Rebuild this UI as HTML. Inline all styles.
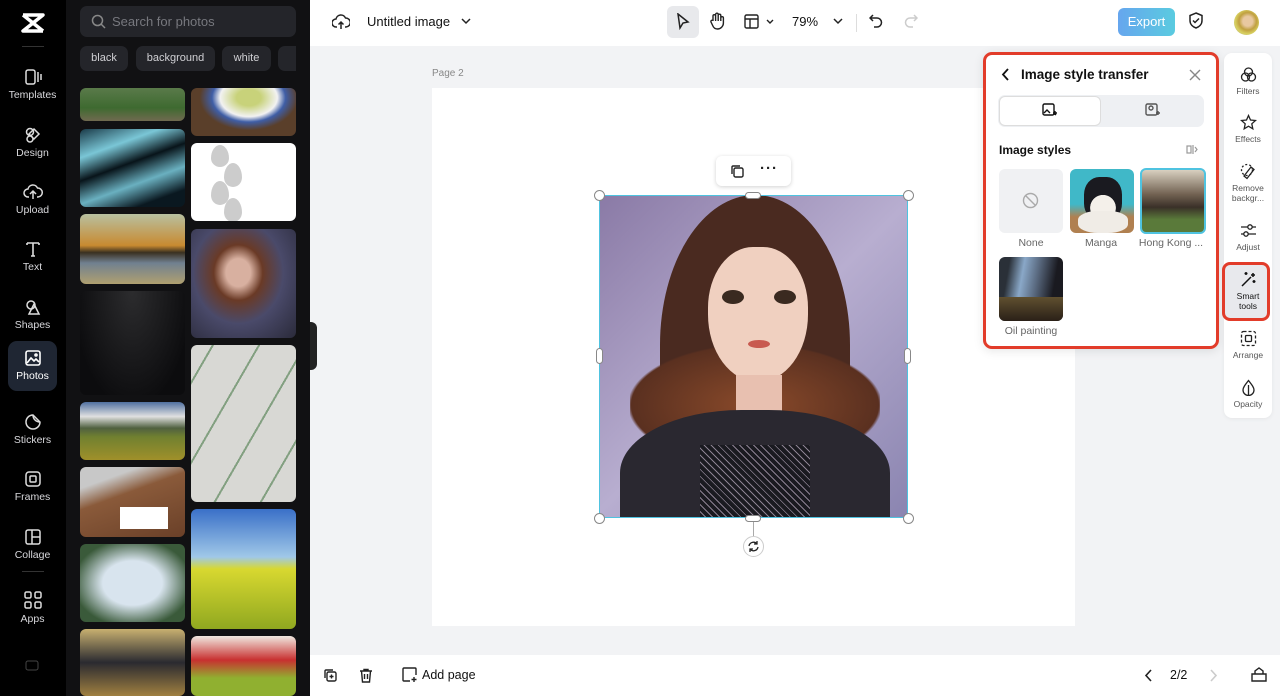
<!DOCTYPE html>
<html><head><meta charset="utf-8"><style>
*{box-sizing:border-box;margin:0;padding:0}
body{width:1280px;height:696px;overflow:hidden;font-family:"Liberation Sans",sans-serif;background:#f2f3f5;position:relative}
.abs{position:absolute}
.rail{left:0;top:0;width:66px;height:696px;background:#000}
.ri{position:absolute;left:8px;width:49px;height:52px;color:#d8d8dc;font-size:10.5px;text-align:center}
.ri svg{display:block;margin:4px auto 3px}
.panel{left:66px;top:0;width:244px;height:696px;background:#111113}
.ph{position:absolute;border-radius:6px}
.chip{position:absolute;top:46px;height:25px;background:#24252a;border-radius:7px;color:#d0d0d4;font-size:11px;line-height:25px;text-align:center}
.top{left:310px;top:0;width:970px;height:46px;background:#fff}
.bot{left:310px;top:655px;width:970px;height:41px;background:#fff}
.rp{position:absolute;left:1224px;width:48px;text-align:center;font-size:8.5px;color:#555;line-height:10px}
.rp svg{display:block;margin:0 auto 3px}
.sty{position:absolute;width:64px;height:64px;border-radius:6px}
.lbl{position:absolute;font-size:10.5px;color:#666;text-align:center;width:70px}
</style></head><body>
<div class="abs rail"></div>
<svg class="abs" style="left:20px;top:13px" width="26" height="20" viewBox="0 0 26 20"><path d="M3 2h20L3 18h20M3 2l20 16" stroke="#fff" stroke-width="3.5" fill="none" stroke-linejoin="round"/></svg>
<div class="abs" style="left:22px;top:46px;width:22px;height:1px;background:#333"></div>
<div class="ri" style="top:64px"><svg width="18" height="18" viewBox="0 0 18 18" fill="none" stroke="#ddd" stroke-width="1.5"><rect x="2" y="2" width="9" height="14" rx="2"/><path d="M14 4v10M17 6v6"/></svg>Templates</div>
<div class="ri" style="top:122px"><svg width="18" height="18" viewBox="0 0 18 18" fill="none" stroke="#ddd" stroke-width="1.5"><circle cx="6" cy="6" r="3.5"/><path d="M10 3l5 5-5 5-5-5z"/><circle cx="6" cy="13" r="3"/></svg>Design</div>
<div class="ri" style="top:179px"><svg width="20" height="18" viewBox="0 0 20 18" fill="none" stroke="#ddd" stroke-width="1.5"><path d="M6 14H5a4 4 0 010-8 5 5 0 019.5-1A4 4 0 0115 14h-1M10 16V9M7 11l3-3 3 3"/></svg>Upload</div>
<div class="ri" style="top:236px"><svg width="18" height="18" viewBox="0 0 18 18" fill="none" stroke="#ddd" stroke-width="1.6"><path d="M3 3h12M9 3v13M3 3v2M15 3v2M7 16h4"/></svg>Text</div>
<div class="ri" style="top:294px"><svg width="18" height="18" viewBox="0 0 18 18" fill="none" stroke="#ddd" stroke-width="1.5"><circle cx="7" cy="7" r="4"/><path d="M10 6l5 10H5z"/></svg>Shapes</div>
<div class="ri" style="top:341px;background:#1f2633;border-radius:9px;height:50px;color:#fff"><svg width="18" height="18" viewBox="0 0 18 18" fill="none" stroke="#fff" stroke-width="1.6" style="margin-top:8px"><rect x="2" y="2" width="14" height="14" rx="2"/><path d="M3 14l4-5 3 3 2-2 3 3"/><circle cx="12" cy="6" r="1"/></svg>Photos</div>
<div class="ri" style="top:409px"><svg width="18" height="18" viewBox="0 0 18 18" fill="none" stroke="#ddd" stroke-width="1.5"><path d="M16 9A7 7 0 119 2l7 7z M16 9c-4 0-7-3-7-7"/></svg>Stickers</div>
<div class="ri" style="top:466px"><svg width="18" height="18" viewBox="0 0 18 18" fill="none" stroke="#ddd" stroke-width="1.5"><rect x="2" y="2" width="14" height="14" rx="3"/><rect x="6" y="6" width="6" height="6" rx="1"/></svg>Frames</div>
<div class="ri" style="top:524px"><svg width="18" height="18" viewBox="0 0 18 18" fill="none" stroke="#ddd" stroke-width="1.5"><rect x="2" y="2" width="14" height="14" rx="2"/><path d="M8 2v14M8 9h8"/></svg>Collage</div>
<div class="abs" style="left:22px;top:571px;width:22px;height:1px;background:#333"></div>
<div class="ri" style="top:586px"><svg width="20" height="20" viewBox="0 0 20 20" fill="none" stroke="#ddd" stroke-width="1.5"><rect x="2" y="2" width="6" height="6" rx="1.5"/><rect x="12" y="2" width="6" height="6" rx="1.5"/><rect x="2" y="12" width="6" height="6" rx="1.5"/><rect x="12" y="12" width="6" height="6" rx="1.5"/></svg>Apps</div>
<svg class="abs" style="left:25px;top:660px" width="14" height="12"><rect x="1" y="1" width="12" height="9" rx="2" fill="none" stroke="#444"/></svg>

<div class="abs panel"></div>
<div class="abs" style="left:80px;top:6px;width:216px;height:31px;background:#24252a;border-radius:7px"></div>
<svg class="abs" style="left:91px;top:14px" width="15" height="15" fill="none" stroke="#888" stroke-width="1.5"><circle cx="6.5" cy="6.5" r="5"/><path d="M10 10l4 4"/></svg>
<div class="abs" style="left:112px;top:14px;font-size:13px;color:#77787e">Search for photos</div>
<div class="chip" style="left:80px;width:48px">black</div>
<div class="chip" style="left:136px;width:79px">background</div>
<div class="chip" style="left:222px;width:49px">white</div>
<div class="chip" style="left:278px;width:18px;border-radius:7px 0 0 7px"></div>
<div class="ph" style="left:80px;top:88px;width:105px;height:33px;background:linear-gradient(#5a7a4a,#3e6a30 60%,#706a50)"></div>
<div class="ph" style="left:191px;top:88px;width:105px;height:48px;background:radial-gradient(ellipse at 55% 20%,#c8d27a 15%,#f2f2f2 35%,#3f5ea6 45%,#5a3f2a 60%)"></div>
<div class="ph" style="left:80px;top:129px;width:105px;height:78px;background:linear-gradient(160deg,#1a3a48,#7ac6d6 25%,#08141a 45%,#6ab0c0 65%,#0a1820 85%)"></div>
<div class="ph" style="left:191px;top:143px;width:105px;height:78px;background:#fff;overflow:hidden">
<div style="position:absolute;left:20px;top:2px;width:18px;height:22px;background:#ccc;border-radius:50% 50% 50% 50%/60% 60% 40% 40%"></div>
<div style="position:absolute;left:33px;top:20px;width:18px;height:24px;background:#ccc;border-radius:50% 50% 50% 50%/60% 60% 40% 40%"></div>
<div style="position:absolute;left:20px;top:38px;width:18px;height:24px;background:#ccc;border-radius:50% 50% 50% 50%/60% 60% 40% 40%"></div>
<div style="position:absolute;left:33px;top:55px;width:18px;height:24px;background:#ccc;border-radius:50% 50% 50% 50%/60% 60% 40% 40%"></div>
</div>
<div class="ph" style="left:80px;top:214px;width:105px;height:70px;background:linear-gradient(#b8c0a0,#c88a30 45%,#3a3020 55%,#708090 70%,#b0a070)"></div>
<div class="ph" style="left:191px;top:229px;width:105px;height:109px;background:radial-gradient(ellipse at 45% 40%,#d8b0a0 15%,#6a3a26 30%,#4a4a6a 55%,#2a2a3a)"></div>
<div class="ph" style="left:80px;top:291px;width:105px;height:104px;background:radial-gradient(ellipse at 50% 0,#2c2c2e,#0c0c0e 80%)"></div>
<div class="ph" style="left:191px;top:345px;width:105px;height:157px;background:#d8d8d4"><div style="position:absolute;inset:0;background:repeating-linear-gradient(120deg,transparent 0 18px,#4a7a4a 18px 20px,transparent 20px 40px);opacity:.6;border-radius:6px"></div></div>
<div class="ph" style="left:80px;top:402px;width:105px;height:58px;background:linear-gradient(#5070a0,#e0e0e0 25%,#506040 45%,#708030 60%,#a0902a)"></div>
<div class="ph" style="left:80px;top:467px;width:105px;height:70px;background:linear-gradient(160deg,#c8c8c8 20%,#8a5a3a 40%,#6a4028)"><div style="position:absolute;left:40px;top:40px;width:48px;height:22px;background:#fff"></div></div>
<div class="ph" style="left:191px;top:509px;width:105px;height:120px;background:linear-gradient(#3a70c8,#a0c8e8 40%,#d8d830 50%,#90a820)"></div>
<div class="ph" style="left:80px;top:544px;width:105px;height:78px;background:radial-gradient(#d8e4ee 40%,#3a5a3a 80%)"></div>
<div class="ph" style="left:80px;top:629px;width:105px;height:67px;background:linear-gradient(#c8b070,#2a2a30 50%,#a08040)"></div>
<div class="ph" style="left:191px;top:636px;width:105px;height:60px;background:linear-gradient(#f0e8e0,#c83030 40%,#90b030 70%)"></div>
<div class="abs" style="left:310px;top:322px;width:7px;height:48px;background:#222;border-radius:0 6px 6px 0"></div>

<div class="abs top"></div>
<svg class="abs" style="left:332px;top:13px" width="18" height="18" fill="none" stroke="#222" stroke-width="1.5"><path d="M5 14H4a4 4 0 010-8 5 5 0 019.5-1A4 4 0 0114 14h-1M9 16V9M6.5 11.5L9 9l2.5 2.5"/></svg>
<div class="abs" style="left:367px;top:14px;font-size:13px;color:#111">Untitled image</div>
<svg class="abs" style="left:461px;top:17px" width="10" height="8" fill="none" stroke="#222" stroke-width="1.5"><path d="M1 2l4 4 4-4"/></svg>
<div class="abs" style="left:667px;top:6px;width:32px;height:32px;background:#e8e9ec;border-radius:6px"></div>
<svg class="abs" style="left:676px;top:13px" width="14" height="17" fill="none" stroke="#222" stroke-width="1.5"><path d="M2 1l10 8-5 1-3 5z"/></svg>
<svg class="abs" style="left:709px;top:12px" width="16" height="18" fill="none" stroke="#222" stroke-width="1.4"><path d="M4 9V4a1.3 1.3 0 012.6 0v5V2.5a1.3 1.3 0 012.6 0V9V3.5a1.3 1.3 0 012.6 0V9 6a1.3 1.3 0 012.6 0v5a6 6 0 01-6 6 5 5 0 01-4.5-3L2 10a1.3 1.3 0 012-1.5z"/></svg>
<svg class="abs" style="left:744px;top:14px" width="30" height="15" fill="none" stroke="#222" stroke-width="1.4"><rect x="1" y="1" width="13" height="13" rx="1.5"/><path d="M1 5h13M6 5v9M23 6l3 3 3-3"/></svg>
<div class="abs" style="left:792px;top:14px;font-size:13px;color:#111">79%</div>
<svg class="abs" style="left:833px;top:17px" width="10" height="8" fill="none" stroke="#222" stroke-width="1.5"><path d="M1 2l4 4 4-4"/></svg>
<div class="abs" style="left:856px;top:14px;width:1px;height:18px;background:#ddd"></div>
<svg class="abs" style="left:869px;top:13px" width="14" height="16" fill="none" stroke="#222" stroke-width="1.5"><path d="M4 2L1 5l3 3M1 5h7a4.5 4.5 0 010 9H5"/></svg>
<svg class="abs" style="left:904px;top:13px" width="14" height="16" fill="none" stroke="#ccc" stroke-width="1.5"><path d="M10 2l3 3-3 3M13 5H6a4.5 4.5 0 000 9h3"/></svg>
<div class="abs" style="left:1118px;top:8px;width:57px;height:28px;border-radius:6px;background:linear-gradient(90deg,#66a6ee,#5acbe0);color:#fff;font-size:13px;text-align:center;line-height:28px">Export</div>
<svg class="abs" style="left:1188px;top:12px" width="16" height="18" fill="none" stroke="#222" stroke-width="1.5"><path d="M8 1l6 2.5v5c0 4-3 6.5-6 7.5-3-1-6-3.5-6-7.5v-5z M5 8.5l2 2 4-4"/></svg>
<div class="abs" style="left:1234px;top:10px;width:25px;height:25px;border-radius:50%;background:radial-gradient(circle at 55% 45%,#e8c8a0 25%,#c0a040 45%,#d8d060 65%,#aaa)"></div>

<div class="abs" style="left:432px;top:68px;font-size:10px;color:#888">Page 2</div>
<div class="abs" style="left:432px;top:88px;width:643px;height:538px;background:#fff"></div>
<div class="abs" style="left:600px;top:195px;width:308px;height:323px;overflow:hidden;background:linear-gradient(135deg,#8a7aa6,#b8aed0 50%,#8a84b0)">
<div style="position:absolute;left:60px;top:0;width:190px;height:300px;border-radius:50% 50% 40% 40%;background:#4a2a20"></div>
<div style="position:absolute;left:30px;top:150px;width:250px;height:120px;border-radius:40%;background:radial-gradient(#8a4a2a,#5a3020 70%,transparent 72%)"></div>
<div style="position:absolute;left:108px;top:52px;width:100px;height:135px;border-radius:45% 45% 50% 50%;background:#f0d0c0"></div>
<div style="position:absolute;left:122px;top:95px;width:22px;height:14px;border-radius:50%;background:#3a2a20"></div>
<div style="position:absolute;left:174px;top:95px;width:22px;height:14px;border-radius:50%;background:#3a2a20"></div>
<div style="position:absolute;left:148px;top:145px;width:22px;height:8px;border-radius:50%;background:#c85a50"></div>
<div style="position:absolute;left:136px;top:180px;width:46px;height:40px;background:#e8c0b0"></div>
<div style="position:absolute;left:20px;top:215px;width:270px;height:140px;border-radius:45% 45% 0 0;background:#2a2830"></div>
<div style="position:absolute;left:100px;top:250px;width:110px;height:73px;background:repeating-linear-gradient(45deg,#1a1a20 0 4px,#8a8090 4px 5px)"></div>
</div>
<div class="abs" style="left:599px;top:195px;width:309px;height:323px;border:1.5px solid #4fc3e0"></div>
<div class="abs" style="left:594px;top:190px;width:11px;height:11px;border-radius:50%;background:#fff;border:1px solid #888"></div>
<div class="abs" style="left:903px;top:190px;width:11px;height:11px;border-radius:50%;background:#fff;border:1px solid #888"></div>
<div class="abs" style="left:594px;top:513px;width:11px;height:11px;border-radius:50%;background:#fff;border:1px solid #888"></div>
<div class="abs" style="left:903px;top:513px;width:11px;height:11px;border-radius:50%;background:#fff;border:1px solid #888"></div>
<div class="abs" style="left:745px;top:192px;width:16px;height:7px;border-radius:4px;background:#fff;border:1px solid #888"></div>
<div class="abs" style="left:745px;top:515px;width:16px;height:7px;border-radius:4px;background:#fff;border:1px solid #888"></div>
<div class="abs" style="left:596px;top:348px;width:7px;height:16px;border-radius:4px;background:#fff;border:1px solid #888"></div>
<div class="abs" style="left:904px;top:348px;width:7px;height:16px;border-radius:4px;background:#fff;border:1px solid #888"></div>
<div class="abs" style="left:753px;top:522px;width:1px;height:14px;background:#aaa"></div>
<div class="abs" style="left:743px;top:536px;width:21px;height:21px;border-radius:50%;background:#fff;border:1px solid #ccc"></div>
<svg class="abs" style="left:747px;top:540px" width="13" height="13" fill="none" stroke="#222" stroke-width="1.3"><path d="M2 6a4.5 4.5 0 018-2M11 7a4.5 4.5 0 01-8 2M10 1v3H7M3 12V9h3"/></svg>
<div class="abs" style="left:716px;top:156px;width:75px;height:30px;background:#fff;border-radius:6px;box-shadow:0 1px 4px rgba(0,0,0,.18)"></div>
<svg class="abs" style="left:730px;top:164px" width="15" height="15" fill="none" stroke="#222" stroke-width="1.4"><rect x="4" y="4" width="9" height="9" rx="1.5"/><path d="M2 10V3a1 1 0 011-1h7"/></svg>
<div class="abs" style="left:760px;top:160px;font-size:15px;font-weight:bold;color:#222;letter-spacing:1px">···</div>

<div class="abs" style="left:983px;top:52px;width:236px;height:297px;background:#fff;border:3px solid #e23c2a;border-radius:9px;box-shadow:0 2px 10px rgba(0,0,0,.1)"></div>
<svg class="abs" style="left:1001px;top:68px" width="10" height="13" fill="none" stroke="#111" stroke-width="1.8"><path d="M7 1L2 6.5 7 12"/></svg>
<div class="abs" style="left:1021px;top:67px;font-size:13.5px;font-weight:bold;color:#111">Image style transfer</div>
<svg class="abs" style="left:1189px;top:69px" width="12" height="12" fill="none" stroke="#888" stroke-width="1.4"><path d="M1 1l10 10M11 1L1 11"/></svg>
<div class="abs" style="left:998px;top:95px;width:206px;height:32px;background:#eef0f3;border-radius:7px"></div>
<div class="abs" style="left:999px;top:96px;width:102px;height:30px;background:#fff;border:1px solid #ddd;border-radius:6px"></div>
<svg class="abs" style="left:1042px;top:103px" width="16" height="15" fill="none" stroke="#111" stroke-width="1.4"><rect x="1" y="1" width="11" height="11" rx="1.5"/><path d="M2 10l3-3 3 3M12 10l2 2M13 8v4M11 10h4"/></svg>
<svg class="abs" style="left:1145px;top:103px" width="16" height="15" fill="none" stroke="#555" stroke-width="1.4"><rect x="1" y="1" width="11" height="11" rx="1.5"/><circle cx="6" cy="5" r="2"/><path d="M13 8v4M11 10h4"/></svg>
<div class="abs" style="left:999px;top:143px;font-size:12px;font-weight:bold;color:#111">Image styles</div>
<svg class="abs" style="left:1186px;top:144px" width="12" height="11" fill="none" stroke="#999" stroke-width="1.2"><rect x="1" y="2" width="4" height="7"/><path d="M7 1v9M9 3l2 2.5L9 8"/></svg>
<div class="sty" style="left:999px;top:169px;background:#f0f1f3"></div>
<svg class="abs" style="left:1022px;top:192px" width="17" height="17" fill="none" stroke="#aaa" stroke-width="1.4"><circle cx="8.5" cy="8.5" r="7"/><path d="M3.5 3.5l10 10"/></svg>
<div class="sty" style="left:1070px;top:169px;background:linear-gradient(#40b8c8 55%,#b08050 75%);overflow:hidden"><div style="position:absolute;left:14px;top:8px;width:38px;height:44px;border-radius:40%;background:radial-gradient(circle at 50% 70%,#f4f0ea 35%,#1a1a20 36%)"></div><div style="position:absolute;left:8px;top:42px;width:50px;height:22px;border-radius:40%;background:#f0ece6"></div></div>
<div class="sty" style="left:1140px;top:168px;width:66px;height:66px;border:2px solid #4fc3e0;background:linear-gradient(#d8d0c0,#706050 40%,#3a3028 60%,#5a7a3a 80%)"></div>
<div class="lbl" style="left:996px;top:237px">None</div>
<div class="lbl" style="left:1066px;top:237px">Manga</div>
<div class="lbl" style="left:1136px;top:237px">Hong Kong ...</div>
<div class="sty" style="left:999px;top:257px;background:linear-gradient(100deg,#2a3038 15%,#8aa8c8 35%,#5a6a80 55%,#1a1a20 80%)"><div style="position:absolute;left:0;bottom:0;width:64px;height:24px;background:linear-gradient(#605030,#2a2018);border-radius:0 0 6px 6px"></div></div>
<div class="lbl" style="left:996px;top:325px">Oil painting</div>

<div class="abs" style="left:1224px;top:53px;width:48px;height:365px;background:#fff;border-radius:8px;box-shadow:0 1px 4px rgba(0,0,0,.06)"></div>
<div class="rp" style="top:66px"><svg width="17" height="17" fill="none" stroke="#222" stroke-width="1.3"><circle cx="8.5" cy="6" r="4"/><circle cx="5.5" cy="11" r="4"/><circle cx="11.5" cy="11" r="4"/></svg>Filters</div>
<div class="rp" style="top:114px"><svg width="17" height="17" fill="none" stroke="#222" stroke-width="1.3"><path d="M8.5 1.5l2 4.5 5 .5-3.7 3.3 1 5-4.3-2.6-4.3 2.6 1-5L1.5 6.5l5-.5z"/></svg>Effects</div>
<div class="rp" style="top:163px"><svg width="17" height="17" fill="none" stroke="#222" stroke-width="1.3"><path d="M4 13l7-9 3 2.5-7 9z" /><circle cx="7" cy="7" r="5.5" stroke-dasharray="2 2"/></svg>Remove backgr...</div>
<div class="rp" style="top:222px"><svg width="17" height="17" fill="none" stroke="#222" stroke-width="1.3"><path d="M1 5h15M1 12h15"/><circle cx="10" cy="5" r="2.2" fill="#fff"/><circle cx="6" cy="12" r="2.2" fill="#fff"/></svg>Adjust</div>
<div class="abs" style="left:1222px;top:262px;width:48px;height:59px;background:#e8e9ed;border:3px solid #e23c2a;border-radius:8px"></div>
<div class="rp" style="top:271px;color:#111"><svg width="17" height="17" fill="none" stroke="#111" stroke-width="1.5"><path d="M2 15l9-9M13 2v4M11 4h4M14 9v3M12.5 10.5h3M6 1v3M4.5 2.5h3"/></svg>Smart<br>tools</div>
<div class="rp" style="top:330px"><svg width="17" height="17" fill="none" stroke="#222" stroke-width="1.3"><rect x="1.5" y="1.5" width="14" height="14" rx="2" stroke-dasharray="3 2"/><rect x="5.5" y="5.5" width="6" height="6" rx="1"/></svg>Arrange</div>
<div class="rp" style="top:379px"><svg width="17" height="17" fill="none" stroke="#222" stroke-width="1.3"><path d="M8.5 1.5C5 6 3 8.5 3 11a5.5 5.5 0 0011 0c0-2.5-2-5-5.5-9.5zM8.5 6v10"/></svg>Opacity</div>

<div class="abs bot"></div>
<svg class="abs" style="left:323px;top:668px" width="15" height="15" fill="none" stroke="#222" stroke-width="1.4"><rect x="4" y="4" width="9" height="9" rx="1.5"/><path d="M2 10V3a1 1 0 011-1h7M8.5 6.5v4M6.5 8.5h4"/></svg>
<svg class="abs" style="left:359px;top:668px" width="14" height="15" fill="none" stroke="#222" stroke-width="1.4"><path d="M1 3h12M5 3V1.5h4V3M2.5 3l1 11h7l1-11M5.5 6v5M8.5 6v5"/></svg>
<svg class="abs" style="left:402px;top:667px" width="16" height="16" fill="none" stroke="#222" stroke-width="1.4"><path d="M14 8V2a1 1 0 00-1-1H2a1 1 0 00-1 1v11a1 1 0 001 1h6M12 10v5M9.5 12.5h5"/></svg>
<div class="abs" style="left:422px;top:668px;font-size:12.5px;color:#111">Add page</div>
<svg class="abs" style="left:1144px;top:669px" width="10" height="13" fill="none" stroke="#222" stroke-width="1.6"><path d="M7 1L2 6.5 7 12"/></svg>
<div class="abs" style="left:1170px;top:668px;font-size:12.5px;color:#111">2/2</div>
<svg class="abs" style="left:1208px;top:669px" width="10" height="13" fill="none" stroke="#ccc" stroke-width="1.6"><path d="M3 1l5 5.5L3 12"/></svg>
<svg class="abs" style="left:1251px;top:667px" width="16" height="15" fill="none" stroke="#222" stroke-width="1.4"><path d="M1 7h14v7H1zM4 7V4l4-3 4 3v3"/></svg>
</body></html>
